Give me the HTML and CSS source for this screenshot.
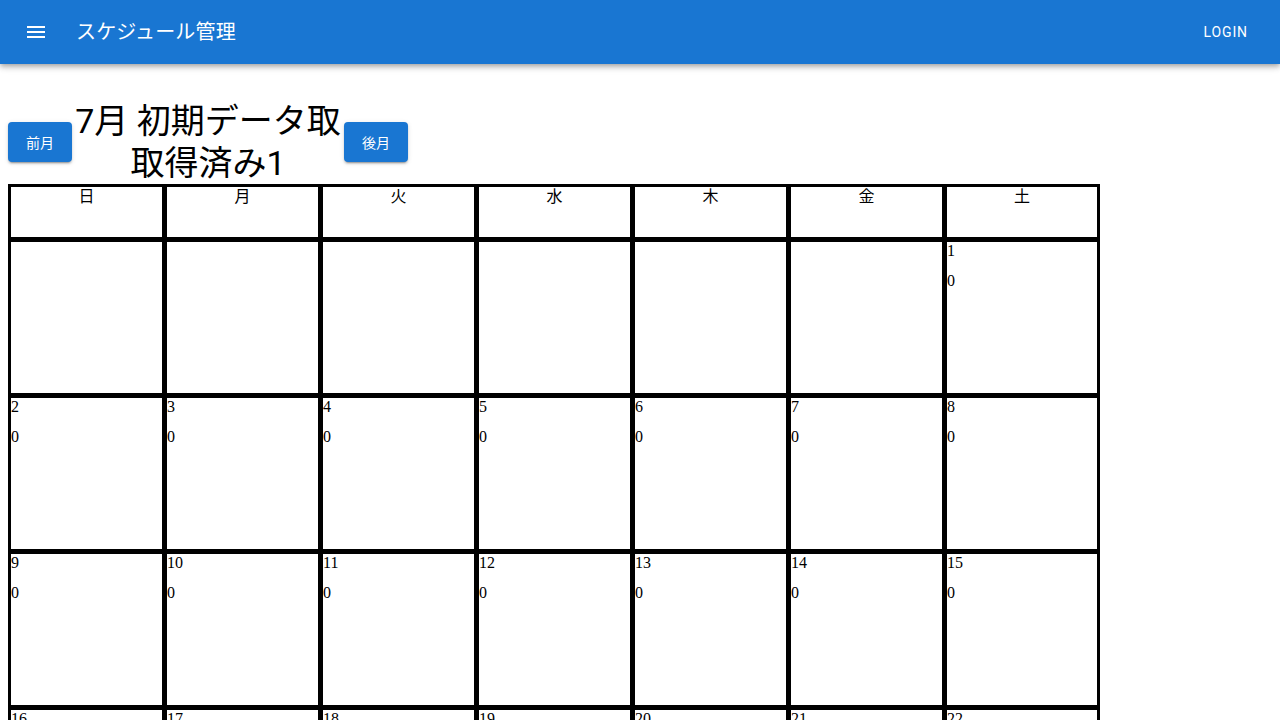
FILE: index.html
```html
<!DOCTYPE html>
<html lang="ja">
<head>
<meta charset="utf-8">
<title>スケジュール管理</title>
<link rel="stylesheet" href="styles.css">
</head>
<body>
<header class="appbar">
  <button class="icon-btn" aria-label="menu">
    <svg viewBox="0 0 24 24" width="24" height="24"><path fill="#fff" d="M3 18h18v-2H3v2zm0-5h18v-2H3v2zm0-7v2h18V6H3z"/></svg>
  </button>
  <div class="app-title">スケジュール管理</div>
  <div class="spacer"></div>
  <button class="login-btn">Login</button>
</header>
<main class="main">
  <div class="month-bar">
    <button class="btn">前月</button>
    <h1 class="month-title">7月 初期データ取取得済み1</h1>
    <button class="btn">後月</button>
  </div>
  <div class="calendar">
    <div class="head">日</div><div class="head">月</div><div class="head">火</div><div class="head">水</div><div class="head">木</div><div class="head">金</div><div class="head">土</div>
    <div class="day"></div><div class="day"></div><div class="day"></div><div class="day"></div><div class="day"></div><div class="day"></div>
    <div class="day"><div class="num">1</div><div class="cnt">0</div></div>
    <div class="day"><div class="num">2</div><div class="cnt">0</div></div>
    <div class="day"><div class="num">3</div><div class="cnt">0</div></div>
    <div class="day"><div class="num">4</div><div class="cnt">0</div></div>
    <div class="day"><div class="num">5</div><div class="cnt">0</div></div>
    <div class="day"><div class="num">6</div><div class="cnt">0</div></div>
    <div class="day"><div class="num">7</div><div class="cnt">0</div></div>
    <div class="day"><div class="num">8</div><div class="cnt">0</div></div>
    <div class="day"><div class="num">9</div><div class="cnt">0</div></div>
    <div class="day"><div class="num">10</div><div class="cnt">0</div></div>
    <div class="day"><div class="num">11</div><div class="cnt">0</div></div>
    <div class="day"><div class="num">12</div><div class="cnt">0</div></div>
    <div class="day"><div class="num">13</div><div class="cnt">0</div></div>
    <div class="day"><div class="num">14</div><div class="cnt">0</div></div>
    <div class="day"><div class="num">15</div><div class="cnt">0</div></div>
    <div class="day"><div class="num">16</div><div class="cnt">0</div></div>
    <div class="day"><div class="num">17</div><div class="cnt">0</div></div>
    <div class="day"><div class="num">18</div><div class="cnt">0</div></div>
    <div class="day"><div class="num">19</div><div class="cnt">0</div></div>
    <div class="day"><div class="num">20</div><div class="cnt">0</div></div>
    <div class="day"><div class="num">21</div><div class="cnt">0</div></div>
    <div class="day"><div class="num">22</div><div class="cnt">0</div></div>
    <div class="day"><div class="num">23</div><div class="cnt">0</div></div>
    <div class="day"><div class="num">24</div><div class="cnt">0</div></div>
    <div class="day"><div class="num">25</div><div class="cnt">0</div></div>
    <div class="day"><div class="num">26</div><div class="cnt">0</div></div>
    <div class="day"><div class="num">27</div><div class="cnt">0</div></div>
    <div class="day"><div class="num">28</div><div class="cnt">0</div></div>
    <div class="day"><div class="num">29</div><div class="cnt">0</div></div>
    <div class="day"><div class="num">30</div><div class="cnt">0</div></div>
    <div class="day"><div class="num">31</div><div class="cnt">0</div></div>
    <div class="day"></div><div class="day"></div><div class="day"></div><div class="day"></div><div class="day"></div>
  </div>
</main>
</body>
</html>
```
FILE: styles.css
```css
html, body {
  margin: 0;
  padding: 0;
  background: #fff;
}
body {
  font-family: "Liberation Serif", "Noto Sans CJK JP", serif;
  font-size: 16px;
  color: #000;
}
.appbar {
  position: relative;
  z-index: 2;
  height: 64px;
  display: flex;
  align-items: center;
  padding: 0 24px;
  background: #1976d2;
  color: #fff;
  box-shadow: 0 2px 4px -1px rgba(0,0,0,0.2), 0 4px 5px 0 rgba(0,0,0,0.14), 0 1px 10px 0 rgba(0,0,0,0.12);
}
.icon-btn {
  margin-left: -12px;
  margin-right: 16px;
  padding: 12px;
  border: 0;
  background: transparent;
  display: flex;
  cursor: pointer;
}
.app-title {
  font-family: Roboto, "Noto Sans CJK JP", sans-serif;
  font-size: 20px;
  font-weight: 400;
  line-height: 1.6;
  letter-spacing: 0.0075em;
}
.spacer { flex: 1; }
.login-btn {
  font-family: Roboto, "Noto Sans CJK JP", sans-serif;
  font-size: 14px;
  font-weight: 400;
  text-transform: uppercase;
  letter-spacing: 0.9px;
  line-height: 1.75;
  padding: 6px 8px;
  border: 0;
  background: transparent;
  color: #fff;
}
.main {
  padding: 36px 8px 8px;
}
.month-bar {
  display: flex;
  align-items: center;
}
.btn {
  font-family: Roboto, "Noto Sans CJK JP", sans-serif;
  font-size: 14px;
  font-weight: 400;
  min-width: 64px;
  height: 40px;
  padding: 0 16px;
  border: 0;
  border-radius: 4px;
  background: #1976d2;
  color: #fff;
  box-shadow: 0 3px 1px -2px rgba(0,0,0,0.2), 0 2px 2px 0 rgba(0,0,0,0.14), 0 1px 5px 0 rgba(0,0,0,0.12);
}
.month-title {
  width: 272px;
  margin: 0;
  text-align: center;
  font-family: Roboto, "Noto Sans CJK JP", sans-serif;
  font-size: 34px;
  font-weight: 400;
  line-height: 42px;
}
.calendar {
  width: 1092px;
  box-sizing: border-box;
  display: grid;
  grid-template-columns: repeat(6, 151px) 150px;
  grid-template-rows: 50px;
  grid-auto-rows: 151px;
  gap: 5px;
  padding: 3px;
  background: #000;
}
.head {
  background: #fff;
  text-align: center;
  line-height: 20px;
}
.day {
  background: #fff;
  line-height: 18px;
}
.cnt {
  margin-top: 12px;
}
```
